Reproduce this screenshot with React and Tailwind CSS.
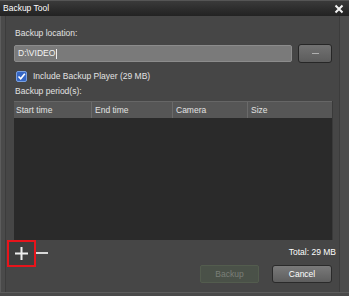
export default function App() {
  const cols = [
    { label: "Start time", w: "w-[77px]" },
    { label: "End time", w: "w-[81px]" },
    { label: "Camera", w: "w-[75px]" },
    { label: "Size", w: "flex-1" },
  ];

  return (
    <div
      className="w-[349px] h-[296px] bg-[#4e4e4e] flex flex-col overflow-hidden text-[8.5px] leading-[11px] text-[#e2e2e2]"
      style={{ fontFamily: '"Liberation Sans", Arial, sans-serif' }}
    >
      {/* title bar */}
      <div className="h-[16px] flex items-center justify-between bg-gradient-to-b from-[#3a3a3a] to-[#222222] border-t border-[#555]">
        <span className="pl-[3px] text-white">Backup Tool</span>
        <svg width="10" height="10" viewBox="0 0 10 10" className="mr-[5px]">
          <path d="M1.5 1.5 L8.5 8.5 M8.5 1.5 L1.5 8.5" stroke="#f2f2f2" strokeWidth="2" />
        </svg>
      </div>

      <div className="flex-1 flex">
        <div className="w-[5px] border-l border-[#5c5c5c] bg-[#4a4a4a]" />

        <div className="w-[335px] h-[276px] bg-[#464646] border-x border-[#3c3c3c] flex flex-col pl-[8px] pr-[6px]">
          <div className="mt-[12px] pl-px">Backup location:</div>

          <div className="mt-[5px] flex items-center">
            <div className="w-[278px] h-[17px] bg-[#7a7a7a] border border-[#8c8c8c] rounded-[2px] flex items-center pl-[3px] text-[#f4f4f4]">
              D:\VIDEO
              <span className="ml-px w-px h-[10px] bg-[#eee]" />
            </div>
            <div className="ml-[6px] w-[34px] h-[19px] rounded-[3px] border border-[#262626] bg-gradient-to-b from-[#727272] to-[#5c5c5c] flex items-center justify-center">
              <span className="w-[7px] h-px bg-[#b0b0b0]" />
            </div>
          </div>

          <div className="mt-[8px] flex items-center pl-[2px]">
            <div className="w-[11px] h-[11px] rounded-[2px] bg-[#3566c4] border border-[#7aa0e0] flex items-center justify-center">
              <svg width="9" height="9" viewBox="0 0 9 9">
                <path d="M1.5 4.5 L3.7 6.8 L7.8 1.8" stroke="#fff" strokeWidth="1.6" fill="none" />
              </svg>
            </div>
            <span className="ml-[6px]">Include Backup Player (29 MB)</span>
          </div>

          <div className="mt-[4px] pl-px">Backup period(s):</div>

          <div className="mt-[4px] w-[319px] flex flex-col border-r border-[#3a3a3a]">
            <div className="h-[17px] flex bg-[#565656] border-t border-[#666]">
              {cols.map((c, i) => (
                <div
                  key={c.label}
                  className={`${c.w} h-full flex items-center ${i === 0 ? "pl-[2px]" : "pl-[3px] border-l border-[#6a6a6a]"}`}
                >
                  {c.label}
                </div>
              ))}
            </div>
            <div className="h-[122px] bg-[#2a2a2a]" />
          </div>

          <div className="flex items-start">
            <div className="-ml-[7px] w-[29px] h-[27px] border-2 border-[#e8141b] bg-[#3e3e3e] flex items-center justify-center">
              <svg width="15" height="15" viewBox="0 0 15 15">
                <path d="M7.5 1 V14 M1 7.5 H14" stroke="#efefef" strokeWidth="2" />
              </svg>
            </div>
            <div className="mt-[12px] w-[12px] h-[1.5px] bg-[#d8d8d8]" />
            <div className="ml-auto mt-[7px] mr-[-3px] text-white">Total: 29 MB</div>
          </div>

          <div className="-mt-[2px] flex justify-end gap-[13px] pr-px">
            <div className="w-[59px] h-[18px] rounded-[2px] border border-[#535c4e] bg-[#4a5148] flex items-center justify-center text-[#7a7f78]">
              Backup
            </div>
            <div className="w-[60px] h-[18px] rounded-[3px] border border-[#2a2a2a] bg-gradient-to-b from-[#7a7a7a] to-[#5e5e5e] flex items-center justify-center text-white">
              Cancel
            </div>
          </div>
        </div>

        <div className="flex-1 bg-[#4c4c4c]" />
      </div>
      <div className="h-[4px] border-t border-[#5c5c5c] bg-[#4a4a4a]" />
    </div>
  );
}
